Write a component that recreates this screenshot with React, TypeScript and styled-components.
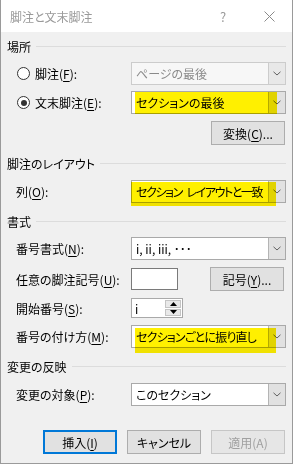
import styled, { createGlobalStyle } from "styled-components";

const GlobalStyle = createGlobalStyle`
  html, body { margin: 0; padding: 0; background: #f0f0f0; }
  body {
    font-family: "Noto Sans CJK JP", "Noto Sans", sans-serif;
    font-size: 12px;
    font-feature-settings: "palt";
    color: #000;
  }
`;

const Window = styled.div`
  width: 293px;
  height: 464px;
  box-sizing: border-box;
  border: 1px solid #9a9a9a;
  border-top: none;
  background: #f0f0f0;
  display: flex;
  flex-direction: column;
`;

const TitleBar = styled.div`
  height: 32px;
  background: #fff;
  display: flex;
  align-items: center;
  padding-left: 9px;
  color: #9a9a9a;
  font-size: 12px;
`;

const TitleText = styled.span`
  flex: 1;
`;

const TitleButton = styled.span`
  width: 46px;
  display: flex;
  justify-content: center;
  align-items: center;
  color: #9a9a9a;
  font-size: 13px;
`;

const Body = styled.div`
  padding: 0 6px;
  display: flex;
  flex-direction: column;
`;

const GroupHeader = styled.div<{ $top: number }>`
  margin-top: ${(p) => p.$top}px;
  height: 16px;
  display: flex;
  align-items: center;
  gap: 5px;
  &::after {
    content: "";
    flex: 1;
    height: 1px;
    background: #dcdcdc;
  }
`;

const Row = styled.div<{ $top: number }>`
  margin-top: ${(p) => p.$top}px;
  display: grid;
  grid-template-columns: 124px minmax(0, 1fr);
  align-items: center;
`;

const Label = styled.label`
  padding-left: 9px;
  white-space: nowrap;
`;

const RadioLabel = styled.label`
  padding-left: 10px;
  display: flex;
  align-items: center;
  gap: 5px;
  white-space: nowrap;
`;

const Radio = styled.span<{ $checked?: boolean }>`
  width: 11px;
  height: 11px;
  border: 1px solid #333;
  border-radius: 50%;
  background: #fff;
  display: flex;
  align-items: center;
  justify-content: center;
  &::after {
    content: "";
    width: 6px;
    height: 6px;
    border-radius: 50%;
    background: ${(p) => (p.$checked ? "#333" : "transparent")};
  }
`;

const Key = styled.span`
  text-decoration: underline;
  text-underline-offset: 2px;
`;

const SelectBox = styled.div<{ $disabled?: boolean }>`
  position: relative;
  height: 23px;
  box-sizing: border-box;
  border: 1px solid ${(p) => (p.$disabled ? "#cccccc" : "#a9a9a9")};
  background: ${(p) => (p.$disabled ? "#f7f7f7" : "#fff")};
  color: ${(p) => (p.$disabled ? "#8a8a8a" : "#000")};
  display: flex;
  align-items: stretch;
`;

const SelectValue = styled.div<{ $spacing: number }>`
  flex: 1;
  min-width: 0;
  display: flex;
  align-items: center;
  padding-left: 4px;
  white-space: pre;
  overflow: hidden;
  letter-spacing: ${(p) => p.$spacing}px;
`;

const ArrowBox = styled.div<{ $disabled?: boolean }>`
  flex: 0 0 16px;
  background: ${(p) => (p.$disabled ? "#e8e8e8" : "#e1e1e1")};
  border-left: 1px solid ${(p) => (p.$disabled ? "#cccccc" : "#b4b4b4")};
  display: flex;
  align-items: center;
  justify-content: center;
`;

const Highlight = styled.div`
  position: absolute;
  background: #fff000;
  mix-blend-mode: multiply;
  pointer-events: none;
`;

const ButtonRow = styled.div<{ $top: number }>`
  margin-top: ${(p) => p.$top}px;
  display: flex;
  justify-content: flex-end;
  gap: 10px;
  padding-right: 1px;
`;

const Button = styled.button<{ $default?: boolean }>`
  width: 74px;
  height: 24px;
  box-sizing: border-box;
  font: inherit;
  color: ${(p) => (p.disabled ? "#a0a0a0" : "#000")};
  background: ${(p) => (p.disabled ? "#e6e6e6" : "#e1e1e1")};
  border: ${(p) =>
    p.$default ? "2px solid #0078d7" : p.disabled ? "1px solid #c6c6c6" : "1px solid #adadad"};
  padding: 0;
  display: flex;
  align-items: center;
  justify-content: center;
`;

const SymbolInput = styled.div`
  width: 47px;
  height: 22px;
  box-sizing: border-box;
  border: 1px solid #7a7a7a;
  background: #fff;
`;

const InputCell = styled.div`
  display: flex;
  justify-content: space-between;
  align-items: center;
  padding-right: 2px;
`;

const Spinner = styled.div`
  width: 52px;
  height: 20px;
  box-sizing: border-box;
  border: 1px solid #a9a9a9;
  background: #fff;
  display: flex;
`;

const SpinValue = styled.div`
  flex: 1;
  padding-left: 3px;
  display: flex;
  align-items: center;
`;

const SpinButtons = styled.div`
  width: 16px;
  display: flex;
  flex-direction: column;
  gap: 1px;
  padding: 1px 1px 1px 0;
`;

const SpinButton = styled.div`
  flex: 1;
  background: #e9e9e9;
  border: 1px solid #c4c4c4;
  display: flex;
  align-items: center;
  justify-content: center;
`;

const Chevron = () => (
  <svg width="8" height="5" viewBox="0 0 8 5">
    <path d="M0.5 0.8 L4 4 L7.5 0.8" fill="none" stroke="#606060" strokeWidth="1" />
  </svg>
);

const CloseIcon = () => (
  <svg width="11" height="11" viewBox="0 0 11 11">
    <path d="M0.5 0.5 L10.5 10.5 M10.5 0.5 L0.5 10.5" stroke="#8a8a8a" strokeWidth="1" />
  </svg>
);

const Triangle = ({ up }: { up?: boolean }) => (
  <svg width="7" height="4" viewBox="0 0 7 4">
    <path d={up ? "M0 4 L3.5 0 L7 4 Z" : "M0 0 L7 0 L3.5 4 Z"} fill="#000" />
  </svg>
);

type Mark = { l: number; t: number; w: number; h: number };

function Select({
  value,
  disabled,
  mark,
  spacing = 0,
}: {
  value: string;
  disabled?: boolean;
  mark?: Mark;
  spacing?: number;
}) {
  return (
    <SelectBox $disabled={disabled}>
      <SelectValue $spacing={spacing}>{value}</SelectValue>
      <ArrowBox $disabled={disabled}>
        <Chevron />
      </ArrowBox>
      {mark && (
        <Highlight style={{ left: mark.l, top: mark.t, width: mark.w, height: mark.h }} />
      )}
    </SelectBox>
  );
}

export default function App() {
  return (
    <>
      <GlobalStyle />
      <Window>
        <TitleBar>
          <TitleText>脚注と文末脚注</TitleText>
          <TitleButton>?</TitleButton>
          <TitleButton>
            <CloseIcon />
          </TitleButton>
        </TitleBar>
        <Body>
          <GroupHeader $top={6}>場所</GroupHeader>
          <Row $top={8}>
            <RadioLabel>
              <Radio />
              <span>
                脚注(<Key>F</Key>):
              </span>
            </RadioLabel>
            <Select value="ページの最後" disabled />
          </Row>
          <Row $top={6}>
            <RadioLabel>
              <Radio $checked />
              <span>
                文末脚注(<Key>E</Key>):
              </span>
            </RadioLabel>
            <Select value="セクションの最後" mark={{ l: 3, t: 0, w: 142, h: 22 }} />
          </Row>
          <ButtonRow $top={7}>
            <Button>
              変換(<Key>C</Key>)...
            </Button>
          </ButtonRow>

          <GroupHeader $top={10}>脚注のレイアウト</GroupHeader>
          <Row $top={9}>
            <Label>
              列(<Key>O</Key>):
            </Label>
            <Select
              value={"セクション\u2002レイアウトと一致"}
              spacing={-1.4}
              mark={{ l: -1, t: 1, w: 145, h: 24 }}
            />
          </Row>

          <GroupHeader $top={10}>書式</GroupHeader>
          <Row $top={8}>
            <Label>
              番号書式(<Key>N</Key>):
            </Label>
            <Select value="i, ii, iii, ･･･" />
          </Row>
          <Row $top={7}>
            <Label>
              任意の脚注記号(<Key>U</Key>):
            </Label>
            <InputCell>
              <SymbolInput />
              <Button>
                記号(<Key>Y</Key>)...
              </Button>
            </InputCell>
          </Row>
          <Row $top={7}>
            <Label>
              開始番号(<Key>S</Key>):
            </Label>
            <Spinner>
              <SpinValue>i</SpinValue>
              <SpinButtons>
                <SpinButton>
                  <Triangle up />
                </SpinButton>
                <SpinButton>
                  <Triangle />
                </SpinButton>
              </SpinButtons>
            </Spinner>
          </Row>
          <Row $top={7}>
            <Label>
              番号の付け方(<Key>M</Key>):
            </Label>
            <Select
              value="セクションごとに振り直し"
              spacing={-0.8}
              mark={{ l: 3, t: 2, w: 141, h: 25 }}
            />
          </Row>

          <GroupHeader $top={10}>変更の反映</GroupHeader>
          <Row $top={9}>
            <Label>
              変更の対象(<Key>P</Key>):
            </Label>
            <Select value="このセクション" />
          </Row>

          <ButtonRow $top={24}>
            <Button $default>
              挿入(<Key>I</Key>)
            </Button>
            <Button>キャンセル</Button>
            <Button disabled>適用(A)</Button>
          </ButtonRow>
        </Body>
      </Window>
    </>
  );
}
